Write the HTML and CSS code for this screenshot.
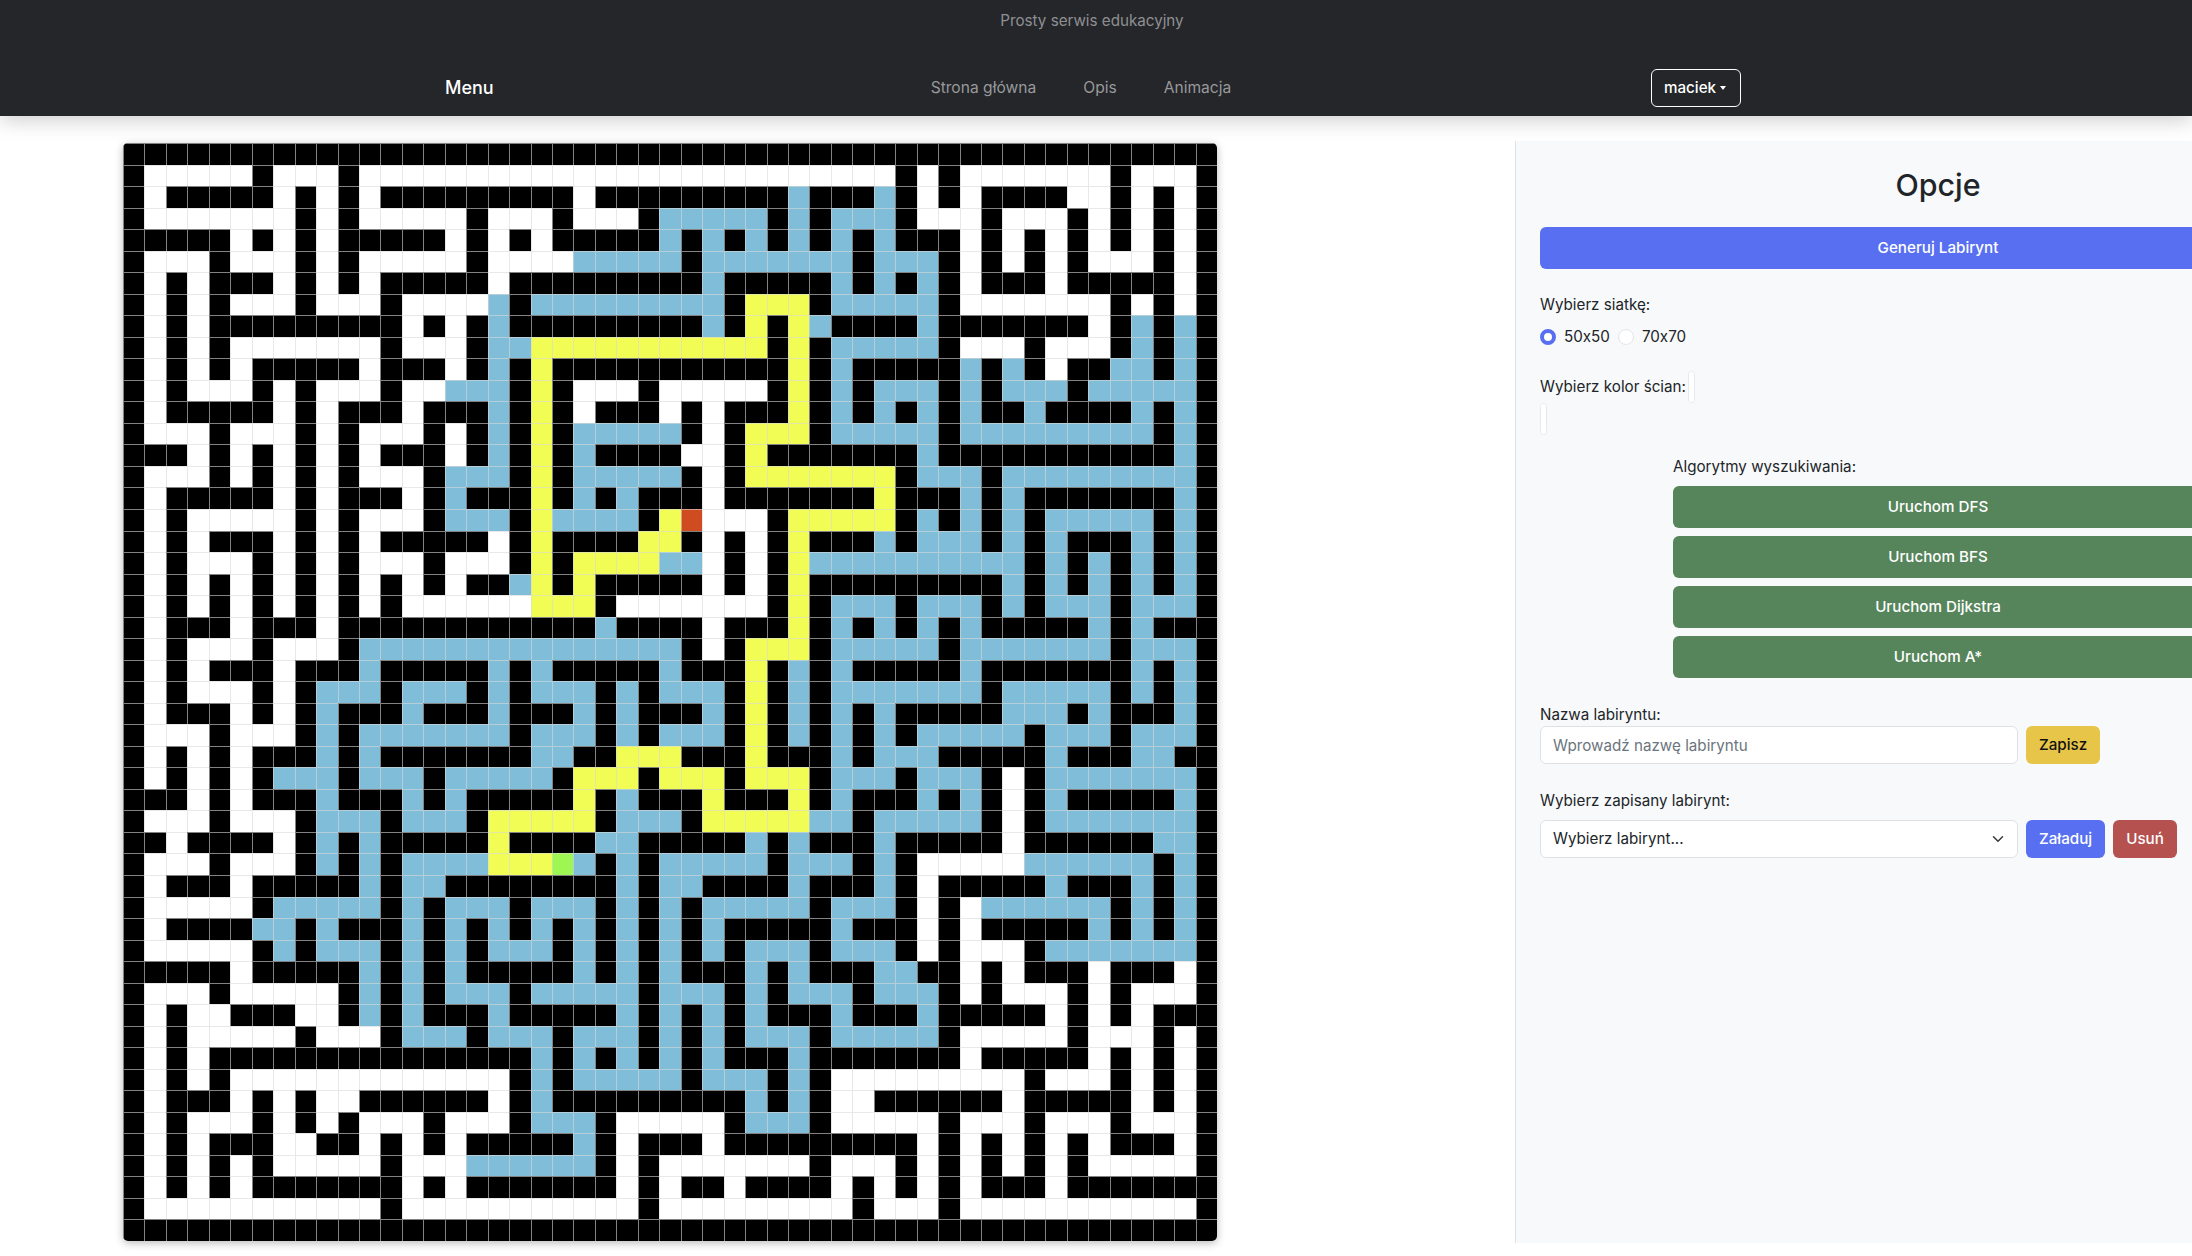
FILE: index.html
```html
<!DOCTYPE html>
<html lang="pl">
<head>
<meta charset="utf-8">
<title>Labirynt</title>
<link rel="stylesheet" href="styles.css">
</head>
<body>
<header class="site-header">
  <p class="tagline">Prosty serwis edukacyjny</p>
  <nav class="navbar">
    <a class="brand">Menu</a>
    <ul class="nav-links">
      <li><a>Strona główna</a></li>
      <li><a>Opis</a></li>
      <li><a>Animacja</a></li>
    </ul>
    <button class="user-btn" type="button">maciek<span class="caret"></span></button>
  </nav>
</header>
<main class="layout">
  <div id="maze" class="maze"></div>
  <aside class="sidebar">
    <div class="sidebar-inner">
      <h2 class="title">Opcje</h2>
      <button class="btn btn-primary btn-wide" type="button">Generuj Labirynt</button>
      <p class="label label-grid">Wybierz siatkę:</p>
      <div class="radios">
        <label class="radio"><input type="radio" name="grid" checked>50x50</label>
        <label class="radio"><input type="radio" name="grid">70x70</label>
      </div>
      <div class="color-row">
        <span class="label">Wybierz kolor ścian:</span>
        <input class="swatch" type="color" value="#ffffff">
      </div>
      <div class="color-row-2">
        <input class="swatch" type="color" value="#ffffff">
      </div>
      <section class="algos">
        <p class="label">Algorytmy wyszukiwania:</p>
        <div class="algo-list">
          <button class="btn btn-success btn-wide" type="button">Uruchom DFS</button>
          <button class="btn btn-success btn-wide" type="button">Uruchom BFS</button>
          <button class="btn btn-success btn-wide" type="button">Uruchom Dijkstra</button>
          <button class="btn btn-success btn-wide" type="button">Uruchom A*</button>
        </div>
      </section>
      <p class="label label-name">Nazwa labiryntu:</p>
      <div class="form-row">
        <input class="field" type="text" placeholder="Wprowadź nazwę labiryntu">
        <button class="btn btn-warning" type="button">Zapisz</button>
      </div>
      <p class="label label-saved">Wybierz zapisany labirynt:</p>
      <div class="form-row">
        <div class="select-wrap">
          <select class="field select"><option>Wybierz labirynt...</option></select>
          <svg class="chevron" width="12" height="12" viewBox="0 0 16 16" fill="none" stroke="#343a40" stroke-width="2" stroke-linecap="round" stroke-linejoin="round"><path d="M2 5l6 6 6-6"/></svg>
        </div>
        <button class="btn btn-primary" type="button">Załaduj</button>
        <button class="btn btn-danger" type="button">Usuń</button>
      </div>
    </div>
  </aside>
</main>
<script src="maze.js"></script>
</body>
</html>
```
FILE: styles.css
```css
* { box-sizing: border-box; }
html, body { margin: 0; padding: 0; }
body {
  width: 2192px;
  height: 1256px;
  overflow: hidden;
  background: #fff;
  color: #212529;
  font-family: Inter, "Noto Sans", "Liberation Sans", sans-serif;
  font-size: 15.2px;
  line-height: 22px;
}
p, h2, ul { margin: 0; padding: 0; }

.site-header {
  position: relative;
  z-index: 2;
  height: 116px;
  background: #24262a;
  box-shadow: 0 4px 20px rgba(0, 0, 0, .2);
  padding-top: 10px;
}
.tagline {
  line-height: 22px;
  text-align: center;
  color: #8f9092;
  padding-right: 8px;
}
.navbar {
  display: flex;
  align-items: center;
  height: 38px;
  margin-top: 37px;
  padding-left: 445px;
  padding-right: 451px;
}
.brand { color: #fff; font-size: 18px; font-weight: 500; }
.nav-links {
  display: flex;
  gap: 47px;
  list-style: none;
  margin-left: 437px;
  color: #98999b;
  font-size: 15.6px;
}
.user-btn {
  margin-left: auto;
  width: 90px;
  height: 38px;
  padding: 0 2px 0 0;
  display: flex;
  align-items: center;
  justify-content: center;
  background: transparent;
  border: 1px solid #fff;
  border-radius: 6px;
  color: #fff;
  font: inherit;
  font-weight: 500;
}
.caret {
  margin-left: 4px;
  border-top: 4px solid #fff;
  border-left: 3.5px solid transparent;
  border-right: 3.5px solid transparent;
}

.layout { display: flex; justify-content: space-between; align-items: flex-start; }

.maze {
  display: grid;
  grid-template-columns: repeat(51, 1fr);
  grid-template-rows: repeat(51, 1fr);
  width: 1094px;
  height: 1098px;
  margin: 27px 0 0 123px;
  border-radius: 5px;
  overflow: hidden;
  box-shadow: 0 2px 8px rgba(0, 0, 0, .28);
}
.cell { border-left: 1px solid rgba(216, 216, 216, .6); border-top: 1px solid rgba(216, 216, 216, .6); }
.wall { background: #000; }
.path { background: #fff; }
.seen { background: #7fbdd8; }
.route { background: #f1fd55; }
.start { background: #9df651; }
.end { background: #cf4b20; }

.sidebar {
  flex: 0 0 677px;
  height: 1102px;
  margin-top: 25px;
  background: #f8f9fa;
  border-left: 1px solid #dee2e6;
  overflow: hidden;
  padding: 27px 0 0 24px;
}
.sidebar-inner { width: 796px; }
.title {
  font-size: 30.4px;
  font-weight: 500;
  line-height: 34px;
  text-align: center;
  margin-bottom: 25px;
}
.btn {
  height: 38px;
  padding: 0 13px;
  border: 0;
  border-radius: 6px;
  font: inherit;
  font-weight: 500;
  color: #fff;
  white-space: nowrap;
}
.btn-wide { display: block; width: 100%; height: 42px; }
.btn-primary { background: #586ff2; }
.btn-success { background: #56855b; }
.btn-warning { background: #e6c548; color: #111; }
.btn-danger { background: #b5524f; }

.label-grid { margin-top: 25px; }
.radios { display: flex; gap: 8px; margin-top: 10px; font-feature-settings: "calt" 0; }
.radio { display: flex; align-items: center; gap: 8px; }
.radio input {
  appearance: none;
  width: 16px;
  height: 16px;
  margin: 0;
  background: #fff;
  border: 1px solid #e3e5e8;
  border-radius: 50%;
}
.radio input:checked { border: 4px solid #586ff2; }

.color-row { display: flex; align-items: center; gap: 2px; height: 32px; margin-top: 23px; }
.color-row-2 { display: flex; height: 32px; }
.swatch {
  appearance: none;
  width: 7px;
  height: 32px;
  padding: 0;
  background: #fff;
  border: 1px solid #e7e9ec;
  border-radius: 4px;
}
.swatch::-webkit-color-swatch-wrapper { padding: 0; }
.swatch::-webkit-color-swatch { border: 0; }

.algos { margin: 21px 0 0 133px; width: 530px; }
.algo-list { display: flex; flex-direction: column; gap: 8px; margin-top: 8px; }

.label-name { margin-top: 26px; }
.label-saved { margin-top: 26px; margin-bottom: 8px; }
.form-row { display: flex; gap: 8px; }
.field {
  width: 478px;
  height: 38px;
  padding: 0 12px;
  background: #fff;
  border: 1px solid #dfe2e5;
  border-radius: 6px;
  font: inherit;
  color: #212529;
  outline: 0;
}
.field::placeholder { color: #6c757d; }
.form-row .btn { flex: none; }
.select-wrap { position: relative; width: 478px; height: 38px; }
.select { appearance: none; margin: 0; display: block; }
.chevron { position: absolute; right: 14px; top: 13px; }
```
FILE: maze.js
```js
var ROWS = [
"51#",
"#5.#3.#25.#.#7.#3.#",
"#.5#.#.#.9#.9#b3#b#.#.4#2.#.#.#",
"#7.#.#5.#3.#3.#5b#b#3b#3.#3.#.#.#.#",
"5#.#.#.5#.#.#.5#b#b#b#b#b#b3#.#.#.#.#.#.#",
"#3.#3.#.#5.#4.5b#7b#3b#.#.#.#3.#.#",
"#.#.3#.#.#.5#.9#b5#b#b#b#.3#.5#.#",
"#.#.#3.#3.#4.b#9b#3y#5b#7.#.#.#",
"#.#.9#.#.#b9#b#y#yb4#b7#.#b#b#",
"#.#.#7.#3.#2b11y#y#5b#3.#3.#b#b#",
"#.#.#.5#.3#.#b#y11#y#b5#b#b#.2#2b#b#",
"#.#3.#.#3.#2.3b#y#3.#5.#y#b#3b#b#3b#5b#",
"#.5#.#.3#.3#b#y#.3#.#.3#y#b#b#b#b2#b4#b#b#",
"#3.#3.#.#3.#.#b#y#5b#.#3y#5b#9b#b#",
"3#.#.#.#.#.3#.#b#y#b4#2.#y7#b11#b#",
"#3.#.#.#.#3.#3b#y#5b#.#7y#3b#9b#",
"#.5#.#.3#.#b3#y#b#b3#.7#y3#b#b7#b#",
"#.#5.#.#3.#3b#y4b#yR3.#5y#b#b#b#5b#b#",
"#.#.3#.#.#.5#.#y4#2y#.#.#y3#b#3b#b#b3#b#b#",
"#.#3.#.#.#3.#3.#y#4y2b.#.#y10b#b#b#b#b#",
"#.#.#.#.#.#.#.#.2#by#y5#.#.#y9#b#b#b#b#b#",
"#.#.#.#.#.#.#6.3y#7.#y#3b#3b#b#3b#3b#",
"#.3#.3#.12#b4#.3#y#b#b#b#b5#b#b3#",
"#.#3.#3.#15b#.#3y#5b#7b#3b#",
"#.#.3#.3#b5#b#b5#b3#y#b#b5#b7#b#b#",
"#.#3.#.#3b#3b#b#3b#b#3b#y#b#7b#5b#b#b#",
"#.3#.#.#b3#b3#b3#b#b3#b#y#b#b#b5#3b#b3#b#",
"#3.#3.#b#7b#3b#b#3b#y#b#b#b#5b#3b#3b#",
"#.#.#.3#b#b7#2b2#3y3#y3#b#3b5#b3#2b2#",
"#.#.#.#3b#3b#5b#3y#3y#3y#3b#3b#.#7b#",
"3#.#.3#b3#b#b5#y#b3#y3#y#b3#b#b#.#b5#b#",
"#3.#3.#3b#3b#5y#3b#5y2b#5b#.#7b#",
"2#.4#.#b#b5#y4#2b5#b#b3#b5#.6#2b#",
"#3.#3.#b#b#4b3yGb#b#5b#3b#b#5.6b#b#",
"#.3#.5#b#2b8#b#2b4#b3#b#.5#b3#b#b#",
"#5.#5b#b#3b#3b#b#b#5b#3b#.#.6b#b#b#",
"#.4#2b#b3#b#b#b#b#b#b#b#b5#b3#.#.5#b#b#b#",
"#5.#b#3b#b#b#3b#b#b#b#b#3b#3b#.#3.#7b#",
"5#.5#b#b#b5#b#b#b3#b#b3#2b2#.#.3#.3#.#",
"#3.#5.#b#b#3b#5b#3b#b#3b#3b#.#3.#.#3.#",
"#.#2.3#2.#b#b3#b5#b#b#b#b3#b3#b5#.#.#.3#",
"#.#5.#3.#3b#3b#3b#b#b#3b#5b#5.#3.#.#",
"#.#.15#b#b#b#b#b3#b7#.5#.#.#.#",
"#.#.#13.#b#5b#3b#b#9.#3.#.#.#",
"#.3#.#.#2.6#.#b9#b#b#2.6#.5#.#.#",
"#.#3.#.#.#3.#3.#3b#5.#3b#5.#3.#3.#3.#",
"#.#.3#2.2#.#.#.5#b#.3#.9#.#.#.#.#.3#.#",
"#.#.#.#5.#3.6b#.#7.#3.#.#.#.#.#5.#",
"#.#.#.7#.#.7#.#.2#.4#.#.#.#.3#.7#",
"#11.#11.#9.#3.#11.#",
"51#"
];
var KIND = { "#": "wall", ".": "path", b: "seen", y: "route", R: "end", G: "start" };
var maze = document.getElementById("maze");
ROWS.forEach(function (row) {
  row.replace(/(\d*)(\D)/g, function (_, count, ch) {
    for (var i = 0; i < (count ? +count : 1); i++) {
      var cell = document.createElement("div");
      cell.className = "cell " + KIND[ch];
      maze.appendChild(cell);
    }
    return "";
  });
});
```
